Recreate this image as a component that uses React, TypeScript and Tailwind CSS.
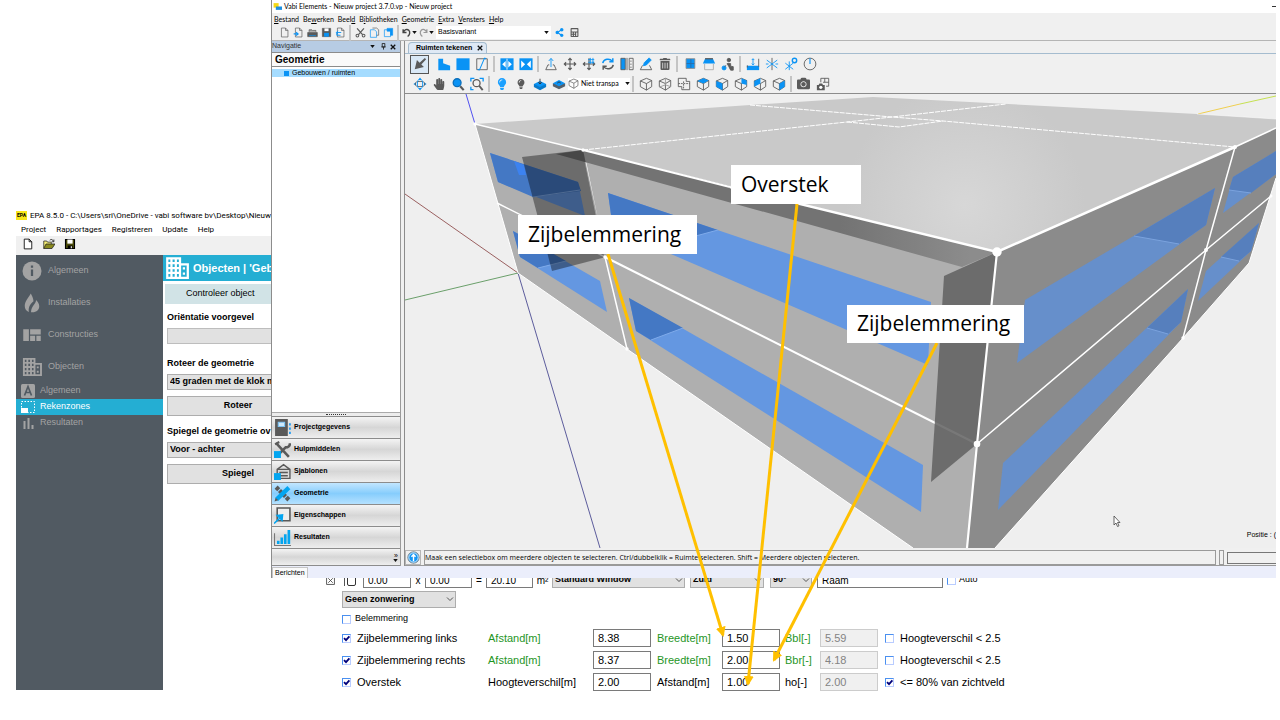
import type { ReactNode } from "react";
import { FaCalculator, FaCamera, FaHandPaper, FaLightbulb, FaShareAlt, FaTrashAlt } from "react-icons/fa";

const BLUE = "#0a93f5";
const INK = "#5a5a5a";

/* ---------- shared bits ---------- */

function Glyph({ children, className = "size-4" }: { children: ReactNode; className?: string }) {
  return (
    <svg viewBox="0 0 16 16" className={`shrink-0 ${className}`} fill="none" stroke={INK} strokeWidth="1" aria-hidden="true">
      {children}
    </svg>
  );
}

function Check({ label, checked = false, className = "" }: { label: string; checked?: boolean; className?: string }) {
  return (
    <label className={`flex items-center whitespace-nowrap ${className}`}>
      <span className="relative size-[9px] shrink-0">
        <input
          type="checkbox"
          defaultChecked={checked}
          className="peer block size-[9px] appearance-none border border-[#b9ccff] border-t-[#4a90f0] border-l-[#4a90f0] bg-white"
        />
        <svg viewBox="0 0 9 9" className="pointer-events-none absolute inset-0 hidden size-[9px] peer-checked:block">
          <path d="M2 4.2 4 6.2 7.4 2.4" fill="none" stroke="#00007a" strokeWidth="1.8" />
        </svg>
      </span>
      <span>{label}</span>
    </label>
  );
}

function Drop({ value, label, className = "" }: { value: string; label: string; className?: string }) {
  return (
    <span className={`relative block shrink-0 ${className}`}>
      <select
        aria-label={label}
        className="block size-full appearance-none border border-[#adadad] bg-[#e1e1e1] pl-0.5 text-[9px] font-bold text-black"
      >
        <option>{value}</option>
      </select>
      <svg viewBox="0 0 8 8" className="pointer-events-none absolute top-1 right-0.5 size-2" fill="none" stroke="#555">
        <path d="M1 2.5 4 5.5 7 2.5" />
      </svg>
    </span>
  );
}

/* ---------- EPA window ---------- */

const buildingIcon = (
  <>
    <path d="M1.5 1.500v13h8.500v-13zM4.300 1.500v13M7.200 1.500v13M1.500 4.700h8.500M1.500 8h8.500M1.500 11.300h8.500" strokeWidth="1.500" />
    <path d="M10 5.500h5.200v9H10M12.600 7.500V9M12.600 11v1.500" strokeWidth="1.500" />
  </>
);

const epaItems = [
  {
    name: "Algemeen",
    icon: (
      <>
        <circle cx="8" cy="8" r="7.6" fill="#a3a3a3" stroke="none" />
        <path d="M8 6.8v5.2M8 3.6v1.8" stroke="#515a62" strokeWidth="1.8" />
      </>
    ),
  },
  {
    name: "Installaties",
    icon: (
      <>
        <path d="M7 .3C5 4 2.200 6.800 2.200 10.300c0 2.200 1.200 4 3.300 4.900C5 12 6 9 9.200 6.600 9 4 8 2 7 .300z" fill="#a3a3a3" stroke="none" />
        <path d="M11.200 5.500c.3 3-3.800 4.500-4 9.800 4 .5 6.800-1.800 6.600-5-.1-1.800-1.200-3.500-2.600-4.800z" fill="#a3a3a3" stroke="none" />
      </>
    ),
  },
  {
    name: "Constructies",
    icon: <path d="M1 3.300h4.500v9.500H1zM6.500 3.300H15v4.300H6.500zM6.500 8.600h4v4.200h-4zM11.500 8.600H15v4.200h-3.500z" fill="#a3a3a3" stroke="none" />,
  },
  { name: "Objecten", icon: <g stroke="#a3a3a3">{buildingIcon}</g> },
];

function EpaWindow() {
  return (
    <section className="mt-[208px] w-[255px] shrink-0 overflow-hidden font-[Roboto,sans-serif] text-[8px] whitespace-nowrap text-black">
      <header className="flex h-[15px] items-center gap-[3px]">
        <span className="flex h-[9px] w-[11px] shrink-0 items-center justify-center bg-[#f7e51c] text-[5px] font-bold">EPA</span>
        <span>EPA 8.5.0 - C:\Users\sri\OneDrive - vabi software bv\Desktop\Nieuw</span>
      </header>
      <nav className="flex h-[13px] items-center gap-[10px] pl-[5px]">
        {["Project", "Rapportages", "Registreren", "Update", "Help"].map((m) => (
          <button key={m}>{m}</button>
        ))}
      </nav>
      <div className="flex h-[19px] items-start gap-[9px] bg-[#f0f0f0] pt-[2px] pl-[6px]">
        <button aria-label="Nieuw">
          <Glyph className="size-3"><path d="M3 1.500h6.500L13 5v9.500H3zM9.500 1.500V5H13" fill="#fff" stroke="#111" strokeWidth="1.200" /></Glyph>
        </button>
        <button aria-label="Openen">
          <Glyph className="size-3">
            <path d="M1 14V4h4l1 1.500h5V8" fill="#f2ec74" stroke="#222" />
            <path d="M1 14 4 8h12l-4 6z" fill="#8a8a1e" stroke="#222" />
            <path d="M9 3c2-2 4-1 5 1.500M14.500 2v3h-3" stroke="#111" />
          </Glyph>
        </button>
        <button aria-label="Opslaan">
          <Glyph className="size-3">
            <path d="M2 2h12v12H2z" fill="#4d4d0a" stroke="#000" strokeWidth="1.500" />
            <path d="M4.500 2h7v5.500h-7z" fill="#fff" stroke="none" />
            <path d="M5 10h6.500v4H5z" fill="#000" stroke="none" />
            <path d="M9 11h1.500v2.500H9z" fill="#fff" stroke="none" />
          </Glyph>
        </button>
      </div>

      <div className="flex font-['Liberation_Sans',Arial,sans-serif] text-[9px]">
        <nav className="h-[435px] w-[147px] shrink-0 bg-[#515a62] text-[#a3a3a3]">
          {epaItems.map((item) => (
            <a key={item.name} href="#" className="flex h-8 items-center gap-[6px] pl-[6px]">
              <Glyph className="size-5">{item.icon}</Glyph>
              {item.name}
            </a>
          ))}
          <a href="#" className="flex h-4 items-center gap-1 pl-1">
            <Glyph>
              <rect x="1" y="1" width="14" height="14" rx="1.500" fill="#a3a3a3" stroke="none" />
              <path d="M4.500 12.500 8 3.500l3.500 9M5.800 9.500h4.400" stroke="#515a62" strokeWidth="1.700" />
            </Glyph>
            Algemeen
          </a>
          <a href="#" className="flex h-4 items-center gap-1 bg-[#24aed3] pl-1 text-white">
            <Glyph>
              <rect x="1.500" y="2.500" width="13" height="11" stroke="#fff" strokeDasharray="1.500 1.500" />
              <path d="M1 9h7v5H1z" fill="#fff" stroke="none" />
            </Glyph>
            Rekenzones
          </a>
          <a href="#" className="flex h-4 items-center gap-1 pl-1">
            <Glyph><path d="M4.500 14V6M8.500 14V3M12.500 14v-4" stroke="#a3a3a3" strokeWidth="2" /></Glyph>
            Resultaten
          </a>
        </nav>

        <div className="w-[150px] shrink-0 font-bold">
          <h1 className="flex h-[26px] items-center gap-1 bg-[#24aed3] pl-[2px] text-[11px] text-white">
            <Glyph className="size-6"><g stroke="#fff">{buildingIcon}</g></Glyph>
            Objecten | 'Geb
          </h1>
          <button className="mt-[3px] ml-[2px] block h-5 w-[148px] bg-[#d1e3e6] pl-[21px] text-left font-normal">Controleer object</button>
          <div className="ml-1 w-[142px]">
            <label htmlFor="orient" className="mt-[7px] block h-3 leading-3">Oriëntatie voorgevel</label>
            <input id="orient" className="mt-[5px] block h-4 w-full border border-[#bdbdbd] bg-[#e1e1e1]" />
            <p className="mt-[13px] h-3 leading-3">Roteer de geometrie</p>
            <Drop label="Roteer de geometrie" value="45 graden met de klok mee" className="mt-[5px] h-4" />
            <button className="mt-[6px] h-5 w-full border border-[#adadad] bg-[#e1e1e1]">Roteer</button>
            <p className="mt-[9px] h-3 leading-3">Spiegel de geometrie ov</p>
            <Drop label="Spiegel de geometrie" value="Voor - achter" className="mt-[5px] h-4" />
            <button className="mt-[6px] h-5 w-full border border-[#adadad] bg-[#e1e1e1]">Spiegel</button>
          </div>
        </div>
      </div>
    </section>
  );
}

/* ---------- Vabi toolbars ---------- */

const page = "M3.500 1.500h6L13 5v9.500H3.500zM9.500 1.500V5H13";
const cube = "M1.500 4.500 8.500 1.500l6 2.500v7l-6 4-7-4zM1.500 4.500l7 3 6-3.500M8.500 7.500V15";

type Tool = { name: string; icon: ReactNode } | "sep";

const fileTools: Tool[] = [
  { name: "Nieuw", icon: <path d={page} /> },
  { name: "Importeren", icon: <><path d={page} /><path d="M1 10h6M4.500 7.500 7.500 10 4.500 12.500" stroke={BLUE} strokeWidth="1.600" /></> },
  { name: "Openen", icon: <><path d="M1 8h14v6H1z" fill={INK} /><path d="M3 7V4h4l1 1h5v2" fill="#999" /><path d="M3 12.500h10" stroke={BLUE} /></> },
  { name: "Opslaan", icon: <><path d="M2 2h12v12H2z" fill={INK} /><path d="M5 2h6v4H5z" fill="#fff" stroke="none" /><path d="M4.500 8.500h7V14h-7z" fill={BLUE} stroke="none" /></> },
  { name: "Exporteren", icon: <><path d={page} /><path d="M9 8H2.500v4H8M4.500 5.500 2 8l2.500 2.500" stroke={BLUE} strokeWidth="1.300" /></> },
  "sep",
  { name: "Knippen", icon: <><path d="M3 2l8 9M13 2 5 11" strokeWidth="1.800" /><circle cx="3.500" cy="12.500" r="2" strokeWidth="1.500" /><circle cx="12.500" cy="12.500" r="2" strokeWidth="1.500" /></> },
  { name: "Kopiëren", icon: <><path d="M2 4h6l3 3v8H2z" stroke={BLUE} /><path d="M5 1.500h6L14 4v8h-3" /></> },
  { name: "Plakken", icon: <><path d="M2 4h9v10H2z" stroke={BLUE} /><path d="M6 2h8v10h-3V6H6z" fill={BLUE} stroke={BLUE} /></> },
  "sep",
];

const drawTools: Tool[] = [
  { name: "Ruimte", icon: <path d="M1.500 2h5.500v5l8 3v5H1.500z" fill={BLUE} stroke="none" /> },
  { name: "Rechthoek", icon: <path d="M.5 1.500h15v13.500H.5z" fill={BLUE} stroke="none" /> },
  { name: "Splitsen", icon: <><path d="M2 2h12v12.500H2z" /><path d="M5 15 11 1M5 15l-2-1M11 1l1.500 1.500" stroke={BLUE} strokeWidth="1.200" /></> },
  "sep",
  { name: "Verbreden", icon: <><path d="M.5 1.500h15V15H.5z" fill={BLUE} stroke="none" /><path d="M6.500 4.500v7.500L2.500 8.200zM9.500 4.500v7.500l4-3.800z" fill="#fff" stroke="none" /><path d="M8 2v12.500" stroke="#fff" /></> },
  { name: "Versmallen", icon: <><path d="M.5 1.500h15V15H.5z" fill={BLUE} stroke="none" /><path d="M2.500 4v8.500L7 8.200zM13.500 4v8.500L9 8.200z" fill="#fff" stroke="none" /></> },
  "sep",
  { name: "Hoogte", icon: <><path d="M4.500 9 2 14.500h12L11.500 9H10M6 9H4.500" /><path d="M8 11.500V2M5.500 4.500 8 1.500l2.500 3" stroke={BLUE} /></> },
  { name: "Verplaatsen", icon: <path d="M8 1.500v13M1.500 8h13M6 3.500l2-2 2 2M6 12.500l2 2 2-2M3.500 6l-2 2 2 2M12.500 6l2 2-2 2" strokeWidth="1.300" /> },
  { name: "Kopie verplaatsen", icon: <><path d="M8 1.500v13M1.500 8h13M6 12.500l2 2 2-2M3.500 6l-2 2 2 2M12.500 6l2 2-2 2" strokeWidth="1.300" /><path d="M7 3h7M7 6h7M9.500 1v7M12.500 1v7" stroke={BLUE} /></> },
  { name: "Roteren", icon: <><path d="M2 7c1-5 8-6 11-2M13.500 1.500V5.500h-4" stroke={BLUE} strokeWidth="1.700" /><path d="M14 9c-1 5-8 6-11 2M2.500 14.500v-4h4" strokeWidth="1.700" /></> },
  { name: "Spiegelen", icon: <><path d="M1 1.500h5v13H1z" fill={BLUE} /><path d="M8 1v14M10.500 1.500H15v13h-4.500z" /><path d="M12.500 4v1.500M12.500 7.500V9M12.500 11v1.500" /></> },
  { name: "Bewerken", icon: <><path d="M4 9.500 1.500 14.500h13L12 9.500" /><path d="m5 10 1-3.500L11.500 1 14 3.500 8.500 9z" fill={BLUE} stroke={BLUE} /></> },
  { name: "Verwijderen", icon: "trash" },
  "sep",
  { name: "Raam", icon: <><path d="M3.500 2h10v11h-10z" fill={BLUE} stroke="#8a8a8a" /><path d="M9 2.500v10M4 7.500h9" stroke="#2c6ca5" /></> },
  { name: "Dak", icon: <><path d="M3.500 2h9L15 7.500H1z" fill={BLUE} stroke="none" /><path d="M3.500 2h9" strokeWidth="1.500" /><path d="M3 8v6.500h10V8" stroke="#aaa" /></> },
  { name: "Personen", icon: <><circle cx="9" cy="3.500" r="2" fill={INK} /><path d="M7 7.500h4v3l3 .5v4h-3l-2-4z" fill={INK} /><circle cx="3.500" cy="12.500" r="2.300" fill={BLUE} stroke={BLUE} /><path d="M6 9.500 4 11" /></> },
  "sep",
  { name: "Maaiveld", icon: <><path d="M1 10h14v5H1z" fill={BLUE} stroke="none" /><path d="M14.500 2v9M1.500 9.500V12" /><path d="M8 2v7M6.500 3.500 8 2l1.500 1.500M6.500 7.500 8 9l1.500-1.500" stroke={BLUE} /></> },
  { name: "Assen", icon: <><path d="M8 1v14" /><path d="m2 3.500 12 9M14 3.500l-12 9M1 8h3M12 8h3" stroke={BLUE} /></> },
  { name: "Assen instellen", icon: <><path d="M6 5v10M1.500 7l9 7M10.500 7l-9 7" stroke={BLUE} /><circle cx="12" cy="4" r="2.500" stroke={BLUE} strokeWidth="1.600" /></> },
  { name: "Noordpijl", icon: <><circle cx="8" cy="8" r="6.700" /><path d="M8 1.500V8" stroke={BLUE} strokeWidth="1.300" /></> },
];

const viewTools: Tool[] = [
  { name: "Draaien", icon: <><path d="M8 .5 6 3.500h4zM8 15.500l-2-3h4zM.5 8l3-2v4zM15.500 8l-3-2v4z" fill={BLUE} stroke="none" /><ellipse cx="8" cy="8" rx="5.500" ry="3" /><ellipse cx="8" cy="8" rx="3" ry="5.500" stroke={BLUE} /></> },
  { name: "Schuiven", icon: "hand" },
  { name: "Inzoomen", icon: <><path d="m10.500 10.500 4 4.500" strokeWidth="2.500" /><circle cx="7" cy="6.500" r="4.500" fill={BLUE} stroke="#0b6fbb" strokeWidth="1.500" /></> },
  { name: "Passend", icon: <><path d="M1 5V1.500h4M11 1.500h4V5M1 11v3.500h3" stroke={BLUE} strokeWidth="1.500" /><circle cx="7.500" cy="7" r="4" strokeWidth="1.500" /><path d="m10.500 10 4 5" strokeWidth="2.200" /></> },
  "sep",
  { name: "Licht aan", icon: "lampOn" },
  { name: "Licht uit", icon: "lampOff" },
  { name: "Laag omlaag", icon: <><path d="M1 8v3.500L8 15l7-3.500V8z" fill="#087acb" stroke="none" /><path d="m1 8 7-3.500L15 8l-7 3.500z" fill={BLUE} stroke="none" /><path d="M8 2v6M6 6l2 2 2-2" stroke="#333" /></> },
  { name: "Laag omhoog", icon: <><path d="M1 7v3.500L8 14l7-3.500V7z" fill="#56606a" stroke="none" /><path d="m1 7 7-3.500L15 7l-7 3.500z" fill={BLUE} stroke="none" /><path d="m6 7 2-1.500L10 7" stroke="#333" /></> },
];

const cubeTools: Tool[] = [
  { name: "Dicht", icon: <path d={cube} /> },
  { name: "Draadmodel", icon: <><path d={cube} /><path d="M8.500 1.500V9M1.500 11.500l7-2.500 6 2" stroke="#999" /></> },
  { name: "Plattegrond", icon: <><path d="M1.500 1.500h9V5h4v9.500h-9V11h-4z" /><path d="M1.500 7.500h13M7.500 5v9" strokeDasharray="2 1" /></> },
  { name: "Boven", icon: <><path d={cube} /><path d="m1.500 4.500 7-3 6 2.500-6 3.500z" fill={BLUE} stroke="none" /></> },
  { name: "Voor", icon: <><path d={cube} /><path d="m1.500 4.500 7 3V15l-7-4z" fill={BLUE} stroke="none" /></> },
  { name: "Achter", icon: <><path d={cube} /><path d="m8.500 1.500 6 2.500v5l-6-1.500z" fill={BLUE} stroke="none" /></> },
  { name: "Links", icon: <><path d={cube} /><path d="m1.500 4.500 7-3v6l-7 3.500z" fill={BLUE} stroke="none" /></> },
  { name: "Rechts", icon: <><path d={cube} /><path d="m8.500 7.500 6-3.500v7l-6 4z" fill={BLUE} stroke="none" /></> },
  "sep",
  { name: "Foto", icon: "camera" },
  { name: "Plattegrond foto", icon: <><path d="M5.500 1.500h9v9h-3M5.500 1.500V6M8 6h6.500M10 1.500V6" /><path d="M1 9h2l1-1.500h3L8 9h2v6H1z" fill={INK} stroke="none" /><circle cx="5.500" cy="11.800" r="1.800" fill="#fff" stroke="none" /></> },
];

const solid: Record<string, ReactNode> = {
  trash: <FaTrashAlt className="size-3 text-[#5a5a5a]" />,
  hand: <FaHandPaper className="size-3 text-[#5a5a5a]" />,
  lampOn: <FaLightbulb className="size-3 text-[#1ba0ff]" />,
  lampOff: <FaLightbulb className="size-[10px] text-[#5a5a5a]" />,
  camera: <FaCamera className="size-[13px] text-[#5a5a5a]" />,
};

function Sep() {
  return <span className="mx-[2px] h-4 w-[2px] shrink-0 bg-[#c4c4c4]" />;
}

function Tools({ items, slot = "w-[19px]" }: { items: Tool[]; slot?: string }) {
  return (
    <>
      {items.map((t, i) =>
        t === "sep" ? (
          <Sep key={i} />
        ) : (
          <button key={t.name} aria-label={t.name} className={`flex h-4 shrink-0 items-center justify-center ${slot}`}>
            {typeof t.icon === "string" ? solid[t.icon] : <Glyph className={slot === "w-[19px]" ? "size-[14px]" : "size-[11px]"}>{t.icon}</Glyph>}
          </button>
        ),
      )}
    </>
  );
}

const caret = (
  <svg viewBox="0 0 6 4" className="h-[3px] w-[5px] shrink-0" aria-hidden="true">
    <path d="M0 0h6L3 4z" fill="#111" />
  </svg>
);

/* ---------- Vabi navigation ---------- */

const navButtons = [
  { name: "Projectgegevens", icon: <><path d="M1 0h12v16H1z" fill={INK} stroke="none" /><path d="M4 3h6v4H4z" fill="#cfe9fb" stroke="#7cc4f5" /><path d="M15 4v2M15 8v2M15 12v2" stroke={BLUE} strokeWidth="1.500" /></> },
  { name: "Hulpmiddelen", icon: <><path d="m2 2 12 13M15 2c0 3-2 4-4 4l-8 8" strokeWidth="2.400" /><path d="M1 3l4-2" strokeWidth="2" /><path d="M0 9.500h6.500V16H0z" fill="#03a5f0" stroke="none" /></> },
  { name: "Sjablonen", icon: <><path d="M3 6 9 1.500 15 6v8.500H3zM3 6h12M5 9h8M5 12h8" strokeWidth="1.300" /><path d="M0 9.500h6.500V16H0z" fill="#03a5f0" stroke="none" /></> },
  { name: "Geometrie", icon: <><path d="m2 2 12 12" strokeWidth="4" strokeDasharray="3.500 1" /><path d="M2.500 13.500 14 2.500" stroke="#03a5f0" strokeWidth="4" /><path d="m.5 15.500 1-3.500 2.500 2.300z" fill={INK} stroke="none" /></> },
  { name: "Eigenschappen", icon: <><path d="M3 1h12v12H3z" fill="#eee" strokeWidth="1.500" /><path d="M0 15.500 7 9M3 8l5-.5-.5 5z" stroke="#03a5f0" strokeWidth="1.500" fill="#03a5f0" /></> },
  { name: "Resultaten", icon: <><path d="M.5 4v11.500H16" stroke="#777" /><path d="M4 14v-3M7.300 14V8M10.600 14V5M14 14V1" stroke="#03a5f0" strokeWidth="2.500" /></> },
];

function Navigation() {
  return (
    <aside className="flex w-[129px] shrink-0 flex-col border-r border-[#9a9a9a] bg-white">
      <div className="flex h-[11px] items-center bg-[#b7cce4] pr-1 text-[7px] text-[#333]">
        <span className="flex-1">Navigatie</span>
        <button aria-label="Menu" className="w-[10px]">{caret}</button>
        <button aria-label="Vastzetten" className="w-[10px]"><Glyph className="size-[7px]"><path d="M5 1h6v8H5zM3 9h10M8 9v6" strokeWidth="2" stroke="#222" /></Glyph></button>
        <button aria-label="Sluiten" className="w-[6px]"><Glyph className="size-[6px]"><path d="m2 2 12 12M14 2 2 14" strokeWidth="3.500" stroke="#111" /></Glyph></button>
      </div>
      <h2 className="flex h-[15px] items-center border-y border-[#8c8c8c] bg-[#fafafa] pl-[3px] text-[10px] font-bold">Geometrie</h2>
      <a href="#" className="mt-[2px] flex h-2 items-center gap-[3px] bg-[#a5dcff] pl-[12px] text-[7px]">
        <span className="size-[5px] bg-[#0a93f5]" />
        Gebouwen / ruimten
      </a>
      <div className="flex-1" />
      <div className="flex h-1 items-center justify-center border-t border-[#aaa] bg-[#ececec]">
        <span className="w-5 border-t border-dotted border-[#333]" />
      </div>
      {navButtons.map((b) => (
        <button
          key={b.name}
          className={`flex h-[22px] items-center gap-[3px] border-t border-[#8c8c8c] bg-linear-to-b pl-[2px] text-[7px] font-bold ${
            b.name === "Geometrie" ? "from-[#c2e6ff] via-[#86cdfc] to-[#b4e1ff]" : "from-[#f4f4f4] via-[#d6d6d6] to-[#eeeeee]"
          }`}
        >
          <Glyph className="size-[17px]">{b.icon}</Glyph>
          {b.name}
        </button>
      ))}
      <div className="flex h-[18px] flex-col items-end justify-center gap-px border-y border-[#8c8c8c] bg-linear-to-b from-[#f4f4f4] via-[#d6d6d6] to-[#eeeeee] pr-[2px] text-[7px] leading-[5px]">
        <span>»</span>
        {caret}
      </div>
    </aside>
  );
}

/* ---------- 3D model ---------- */

const LIT = "#6497e1";
const DEEP = "#4478c4";
const LIT_SIDE = "#668fcb";
const DEEP_SIDE = "#567fbd";

// [outline, darker part, pane edge]
const frontWindows = [
  ["490,153 578,182 585,216 498,182", "490,153 578,182 581,191 533,197 498,182", "533,197 580,190"],
  ["608,193 931,302 928,365 613,229", "608,193 718,230 655,247 613,229", "655,247 718,230"],
  ["513,231 600,281 607,312 520,257", "513,231 566,261 538,268 520,257", "538,268 566,261"],
  ["629,298 923,465 921,512 636,331", "629,298 683,328 651,340 636,331", "651,340 683,328"],
];
const sideWindows = [
  ["1025,300 1215,188 1206,225 1017,363", "1134,236 1215,188 1206,225 1179,244", "1134,236 1179,244"],
  ["1003,463 1188,289 1181,322 998,510", "1147,328 1188,289 1181,322 1168,334", "1147,328 1168,334"],
  ["1233,177 1276,151 1276,174 1223,213", "1233,177 1276,151 1276,174 1251,193 1229,190", "1229,190 1251,193"],
  ["1206,271 1259,223 1251,251 1198,301", "1221,257 1259,223 1251,251 1239,261", "1221,257 1239,261"],
];

function Scene() {
  return (
    <svg viewBox="405 94 871 454" preserveAspectRatio="xMinYMin slice" className="block h-[454px] w-full bg-[#efefef]" role="img" aria-label="3D model">
      <defs>
        <radialGradient id="roof" gradientUnits="userSpaceOnUse" cx="965" cy="205" r="120">
          <stop offset="0" stopColor="#d7d7d7" />
          <stop offset="1" stopColor="#c9c9c9" />
        </radialGradient>
        <linearGradient id="overhang" gradientUnits="userSpaceOnUse" x1="840" y1="0" x2="970" y2="0">
          <stop offset="0" stopColor="#737373" />
          <stop offset="1" stopColor="#8c8c8c" />
        </linearGradient>
      </defs>

      {/* axes */}
      <path d="M466 94 475 124" stroke="#5050f0" />
      <path d="M405 194 518 273" stroke="#9a6060" />
      <path d="M405 300 518 273" stroke="#6a9f6a" />
      <path d="M518 273 600 548" stroke="#5c5c9c" />
      <path d="M1198 114 1240 104" stroke="#f0cf50" />
      <path d="M1240 104 1276 96" stroke="#c5e050" />

      {/* faces */}
      <path d="M475 124 750 105 873 97 1197 114 1276 119 1276 128 1235 147 997 252 583 150z" fill="url(#roof)" />
      <path d="M475 124 583 150 997 252 977 444 967 548H913L627 349 518 273z" fill="#afafaf" />
      <path d="M997 252 1235 147 1276 128V178L1249 263 1183 338 995 548H967L977 444z" fill="#8b8b8b" />

      {frontWindows.map(([outline, deep, edge]) => (
        <g key={outline}>
          <polygon points={outline} fill={LIT} />
          <polygon points={deep} fill={DEEP} />
          <polyline points={edge} stroke="#7fabeb" fill="none" />
        </g>
      ))}
      {sideWindows.map(([outline, deep, edge]) => (
        <g key={outline}>
          <polygon points={outline} fill={LIT_SIDE} />
          <polygon points={deep} fill={DEEP_SIDE} />
          <polyline points={edge} stroke="#7ba3de" fill="none" />
        </g>
      ))}
      <path d="M514 161 524 165 526 175H519z" fill="#3c82f0" />

      {/* storey and zone lines */}
      <g stroke="#fff" fill="none">
        <path d="M583 150 847 122 892 117 1006 104M750 105 892 117 943 121 1235 147M847 122 899 127 943 121" strokeDasharray="5 1" />
        <path d="M475 124 518 273 627 349 913 548M995 548 1183 338 1249 263 1276 178" strokeWidth="1" />
        <path d="M1276 119 1197 114" strokeOpacity=".5" />
        <path d="M583 150 605 257 627 349" strokeWidth="1.500" />
        <path d="M497 203 605 257" strokeWidth="1.500" />
        <path d="M605 257 977 444" strokeWidth="2" />
        <path d="M475 124 583 150" strokeWidth="1.500" />
        <path d="M977 444 1206 250 1271 196M1235 147 1206 250 1183 338" strokeWidth="1.500" />
        <path d="M1276 128 1235 147" strokeWidth="1.500" />
      </g>

      {/* obstructions */}
      <path d="M556 154 583 150 997 252 962 267z" fill="url(#overhang)" />
      <path d="M522 157 583 150 606 257 552 271z" fill="#000" fillOpacity=".38" />
      <path d="M944 276 997 252 977 444 931 482z" fill="#606060" fillOpacity=".85" />

      <g stroke="#fff" fill="none">
        <path d="M583 150 730 187" strokeWidth="2" />
        <path d="M730 187 997 252 1235 147" strokeWidth="2.500" />
        <path d="M997 252 977 444 967 548" strokeWidth="2.200" />
      </g>
      <g fill="#fff">
        <circle cx="997" cy="252" r="4.700" />
        <circle cx="977" cy="444" r="3.300" />
        <circle cx="1235" cy="147" r="2" />
        <circle cx="1206" cy="250" r="2" />
        <circle cx="1183" cy="338" r="1.700" />
        <circle cx="583" cy="150" r="1.700" />
        <circle cx="605" cy="257" r="1.700" />
        <circle cx="627" cy="349" r="1.700" />
        <circle cx="475" cy="124" r="1.700" />
        <circle cx="1271" cy="196" r="1.500" />
      </g>

      {/* mouse pointer */}
      <path d="M1114 516v9l2-2 1.500 3.500 1.500-.7-1.500-3.300h2.500z" fill="#fff" stroke="#444" strokeWidth=".8" />
    </svg>
  );
}

/* ---------- Vabi window ---------- */

const menus = [
  ["", "B", "estand"],
  ["Be", "w", "erken"],
  ["Beel", "d", ""],
  ["B", "i", "bliotheken"],
  ["", "G", "eometrie"],
  ["", "E", "xtra"],
  ["", "V", "ensters"],
  ["", "H", "elp"],
];

function VabiWindow() {
  return (
    <section className="border-l border-[#8c8c8c] bg-[#f0f0f0] font-['Liberation_Sans',Arial,sans-serif] text-[7px] whitespace-nowrap text-black">
      <header className="flex h-[13px] items-center gap-[2px] bg-white pl-px font-[Lato,sans-serif]">
        <Glyph className="size-[9px]"><path d="M1 2h9v8H1z" fill="#f5d916" stroke="none" /><path d="M5 8h11v6H5z" fill="#1b8fe0" stroke="none" /></Glyph>
        <span className="flex-1">Vabi Elements - Nieuw project 3.7.0.vp - Nieuw project</span>
        <button aria-label="Minimaliseren" className="w-1 border-t border-[#333]" />
      </header>
      <nav className="flex h-3 items-center gap-1 pl-[2px] font-[Lato,sans-serif]">
        {menus.map(([pre, key, post]) => (
          <button key={pre + key + post}>
            {pre}<u>{key}</u>{post}
          </button>
        ))}
      </nav>
      <div className="flex h-4 items-center border-b border-[#b5b5b5] pl-[5px]">
        <Tools items={fileTools} slot="w-[14px]" />
        <button aria-label="Ongedaan maken" className="mr-px ml-px"><Glyph className="size-[9px]"><path d="M2 2v6h6M2 8c2-5 7-7 10-4s2 8-2 11" strokeWidth="2.500" stroke="#444" /></Glyph></button>
        {caret}
        <button aria-label="Opnieuw" className="mr-px ml-[2px]"><Glyph className="size-[9px]"><path d="M14 2v6H8M14 8C12 3 7 1 4 4s-2 8 2 11" strokeWidth="2.200" stroke="#999" /></Glyph></button>
        {caret}
        <button className="mr-1 ml-[2px] flex h-[13px] w-[115px] items-center justify-between bg-white px-[2px]">
          Basisvariant
          {caret}
        </button>
        <button aria-label="Delen"><FaShareAlt className="size-[9px] text-[#0a93f5]" /></button>
        <button aria-label="Rekenen" className="ml-[6px]"><FaCalculator className="size-[9px] text-[#5a5a5a]" /></button>
      </div>

      <div className="flex h-[525px]">
        <Navigation />
        <div className="ml-[3px] flex min-w-0 flex-1 flex-col border-l border-[#8c8c8c]">
          <div className="flex h-[13px] items-end border-b border-[#a5bccf] pl-[3px]">
            <button className="flex h-[11px] items-center gap-[5px] rounded-t border border-b-0 border-[#a5bccf] bg-[#dfe9f5] pr-[3px] pl-[7px] font-bold">
              Ruimten tekenen
              <Glyph className="size-[6px]"><path d="m2 2 12 12M14 2 2 14" strokeWidth="3.500" stroke="#111" /></Glyph>
            </button>
          </div>
          <div className="flex h-5 items-center pl-[5px]">
            <button aria-label="Selecteren" className="mr-[5px] flex size-[19px] shrink-0 items-center justify-center border border-[#555] bg-[#d9e8f6]">
              <Glyph className="size-[14px]"><path d="M13.500 1 15 2.500 9.500 8.500l3 3L2 14 4.500 3.500l3 3z" fill={INK} stroke="none" /></Glyph>
            </button>
            <Tools items={drawTools} />
          </div>
          <div className="flex h-5 items-center border-b border-[#8c8c8c] pl-[5px]">
            <Tools items={viewTools} />
            <button className="flex h-3 w-[62px] shrink-0 items-center gap-[2px] bg-white font-[Lato,sans-serif]">
              <Glyph className="size-[11px]"><path d={cube} /></Glyph>
              <span className="flex-1 text-left">Niet transpa</span>
              {caret}
            </button>
            <Sep />
            <Tools items={cubeTools} />
          </div>
          <div className="relative overflow-hidden">
            <Scene />
            <span className="absolute right-0 bottom-2">Positie : (</span>
          </div>
          <div className="flex h-[18px] items-center gap-[3px] border-b border-[#9a9a9a] pt-[2px]">
            <button aria-label="Help" className="flex h-full w-4 items-center justify-center border border-[#b5b5b5]">
              <Glyph className="size-[13px]"><circle cx="8" cy="8" r="7" fill="#1495f3" stroke="#777" /><circle cx="8" cy="8" r="5.800" stroke="#fff" /><path d="M8 12.500V4.500M5.500 7 8 4.300 10.500 7" stroke="#fff" strokeWidth="1.700" /></Glyph>
            </button>
            <p className="flex h-full flex-1 items-center border border-[#9a9a9a] pt-px font-['Open_Sans',sans-serif]">
              Maak een selectiebox om meerdere objecten te selecteren. Ctrl/dubbelklik = Ruimte selecteren. Shift = Meerdere objecten selecteren.
            </p>
            <span className="h-full w-[5px] border border-[#9a9a9a]" />
            <span className="h-[12px] w-[49px] border border-r-0 border-[#777]" />
          </div>
        </div>
      </div>
      <footer className="flex h-3 items-end bg-[#ebeefb]">
        <button className="h-[11px] border border-b-0 border-[#c5c5c5] bg-[#fafafa] px-[2px] leading-[10px]">Berichten</button>
      </footer>
    </section>
  );
}

/* ---------- window properties form ---------- */

const obstructions = [
  { name: "Zijbelemmering links", a: ["Afstand[m]", "8.38"], b: ["Breedte[m]", "1.50"], c: ["Bbl[-]", "5.59"], tail: "Hoogteverschil < 2.5", green: true },
  { name: "Zijbelemmering rechts", a: ["Afstand[m]", "8.37"], b: ["Breedte[m]", "2.00"], c: ["Bbr[-]", "4.18"], tail: "Hoogteverschil < 2.5", green: true },
  { name: "Overstek", a: ["Hoogteverschil[m]", "2.00"], b: ["Afstand[m]", "1.00"], c: ["ho[-]", "2.00"], tail: "<= 80% van zichtveld", green: false },
];

function Field({ id, label, value, green, disabled = false }: { id: string; label: string; value: string; green: boolean; disabled?: boolean }) {
  return (
    <>
      <label htmlFor={id} className={green ? "text-[#1f961f]" : ""}>{label}</label>
      <input
        id={id}
        defaultValue={value}
        disabled={disabled}
        className="h-[18px] w-[58px] border border-[#7a7a7a] bg-white pl-1 disabled:border-[#cccccc] disabled:bg-[#f0f0f0] disabled:text-[#838383]"
      />
    </>
  );
}

function PropertiesForm() {
  const box = "h-4 shrink-0 border border-[#7a7a7a] bg-white pl-1";
  return (
    <form className="font-['Liberation_Sans',Arial,sans-serif] text-[11px] whitespace-nowrap text-black">
      {/* scrolled partly out of view */}
      <div className="flex h-[10px] items-end overflow-hidden pl-[55px] text-[10px]">
        <div className="flex h-4 shrink-0 items-center">
          <Glyph className="size-[9px]"><path d="M1 0h14v15H1zM4 4l8 8M12 4l-8 8" stroke="#444" strokeWidth="1.500" /></Glyph>
          <span className="mr-[7px] ml-[9px] flex h-3 w-3 items-end justify-end border-l border-[#555]">
            <span className="h-3 w-[9px] rounded-xs border border-[#333]" />
          </span>
          <input aria-label="Breedte" defaultValue="0.00" className={`${box} w-12`} />
          <span className="w-[14px] text-center">x</span>
          <input aria-label="Hoogte" defaultValue="0.00" className={`${box} w-[47px]`} />
          <span className="w-[14px] text-center">=</span>
          <input aria-label="Oppervlakte" defaultValue="20.10" className={`${box} w-[47px]`} />
          <span className="w-[19px] text-center">m²</span>
          <Drop label="Type" value="Standard Window" className="mr-[5px] h-4 w-[133px]" />
          <Drop label="Oriëntatie" value="Zuid" className="mr-[6px] h-4 w-[74px]" />
          <Drop label="Helling" value="90°" className="mr-[5px] h-4 w-[42px]" />
          <input aria-label="Omschrijving" defaultValue="Raam" className={`${box} w-[126px]`} />
          <Check label="Auto" className="ml-[4px] gap-[3px] text-[9px]" />
        </div>
      </div>

      <div className="pl-[71px]">
        <Drop label="Zonwering" value="Geen zonwering" className="mt-[3px] h-[17px] w-[114px]" />
        <Check label="Belemmering" className="mt-[5px] h-3 gap-1 text-[9px]" />
        <div className="mt-[2px]">
          {obstructions.map((o) => (
            <div
              key={o.name}
              className="grid h-[22px] grid-cols-[146px_105px_64px_65px_63px_35px_65px_auto] items-center justify-start"
            >
              <Check label={o.name} checked className="gap-[6px]" />
              <Field id={`${o.name}-a`} label={o.a[0]} value={o.a[1]} green={o.green} />
              <Field id={`${o.name}-b`} label={o.b[0]} value={o.b[1]} green={o.green} />
              <Field id={`${o.name}-c`} label={o.c[0]} value={o.c[1]} green={o.green} disabled />
              <Check label={o.tail} checked={!o.green} className="gap-[6px]" />
            </div>
          ))}
        </div>
      </div>
    </form>
  );
}

/* ---------- callouts ---------- */

function Callouts() {
  const card = "absolute flex items-center bg-white pl-[10px]";
  return (
    <div className="pointer-events-none absolute inset-0 overflow-hidden font-['Open_Sans',sans-serif] text-[21px] text-black">
      <svg className="absolute top-0 left-0" width="1280" height="720" fill="none" stroke="#ffc000" strokeWidth="3" aria-hidden="true">
        <defs>
          <marker id="head" markerUnits="userSpaceOnUse" markerWidth="12" markerHeight="12" refX="8" refY="5" orient="auto">
            <path d="M0 0 10 5 0 10z" fill="#ffc000" stroke="none" />
          </marker>
        </defs>
        <path d="M608 254 723 635" markerEnd="url(#head)" />
        <path d="M797 204 748 684" markerEnd="url(#head)" />
        <path d="M937 343 774 660" markerEnd="url(#head)" />
      </svg>
      <span className={`${card} top-[165px] left-[731px] h-[39px] w-[130px]`}>Overstek</span>
      <span className={`${card} top-[215px] left-[518px] h-[39px] w-[179px]`}>Zijbelemmering</span>
      <span className={`${card} top-[305px] left-[847px] h-[38px] w-[177px]`}>Zijbelemmering</span>
    </div>
  );
}

export default function App() {
  return (
    <main className="relative flex min-h-screen items-start bg-white pr-1 pl-4">
      <EpaWindow />
      <div className="min-w-0 flex-1">
        <VabiWindow />
        <PropertiesForm />
      </div>
      <Callouts />
    </main>
  );
}
